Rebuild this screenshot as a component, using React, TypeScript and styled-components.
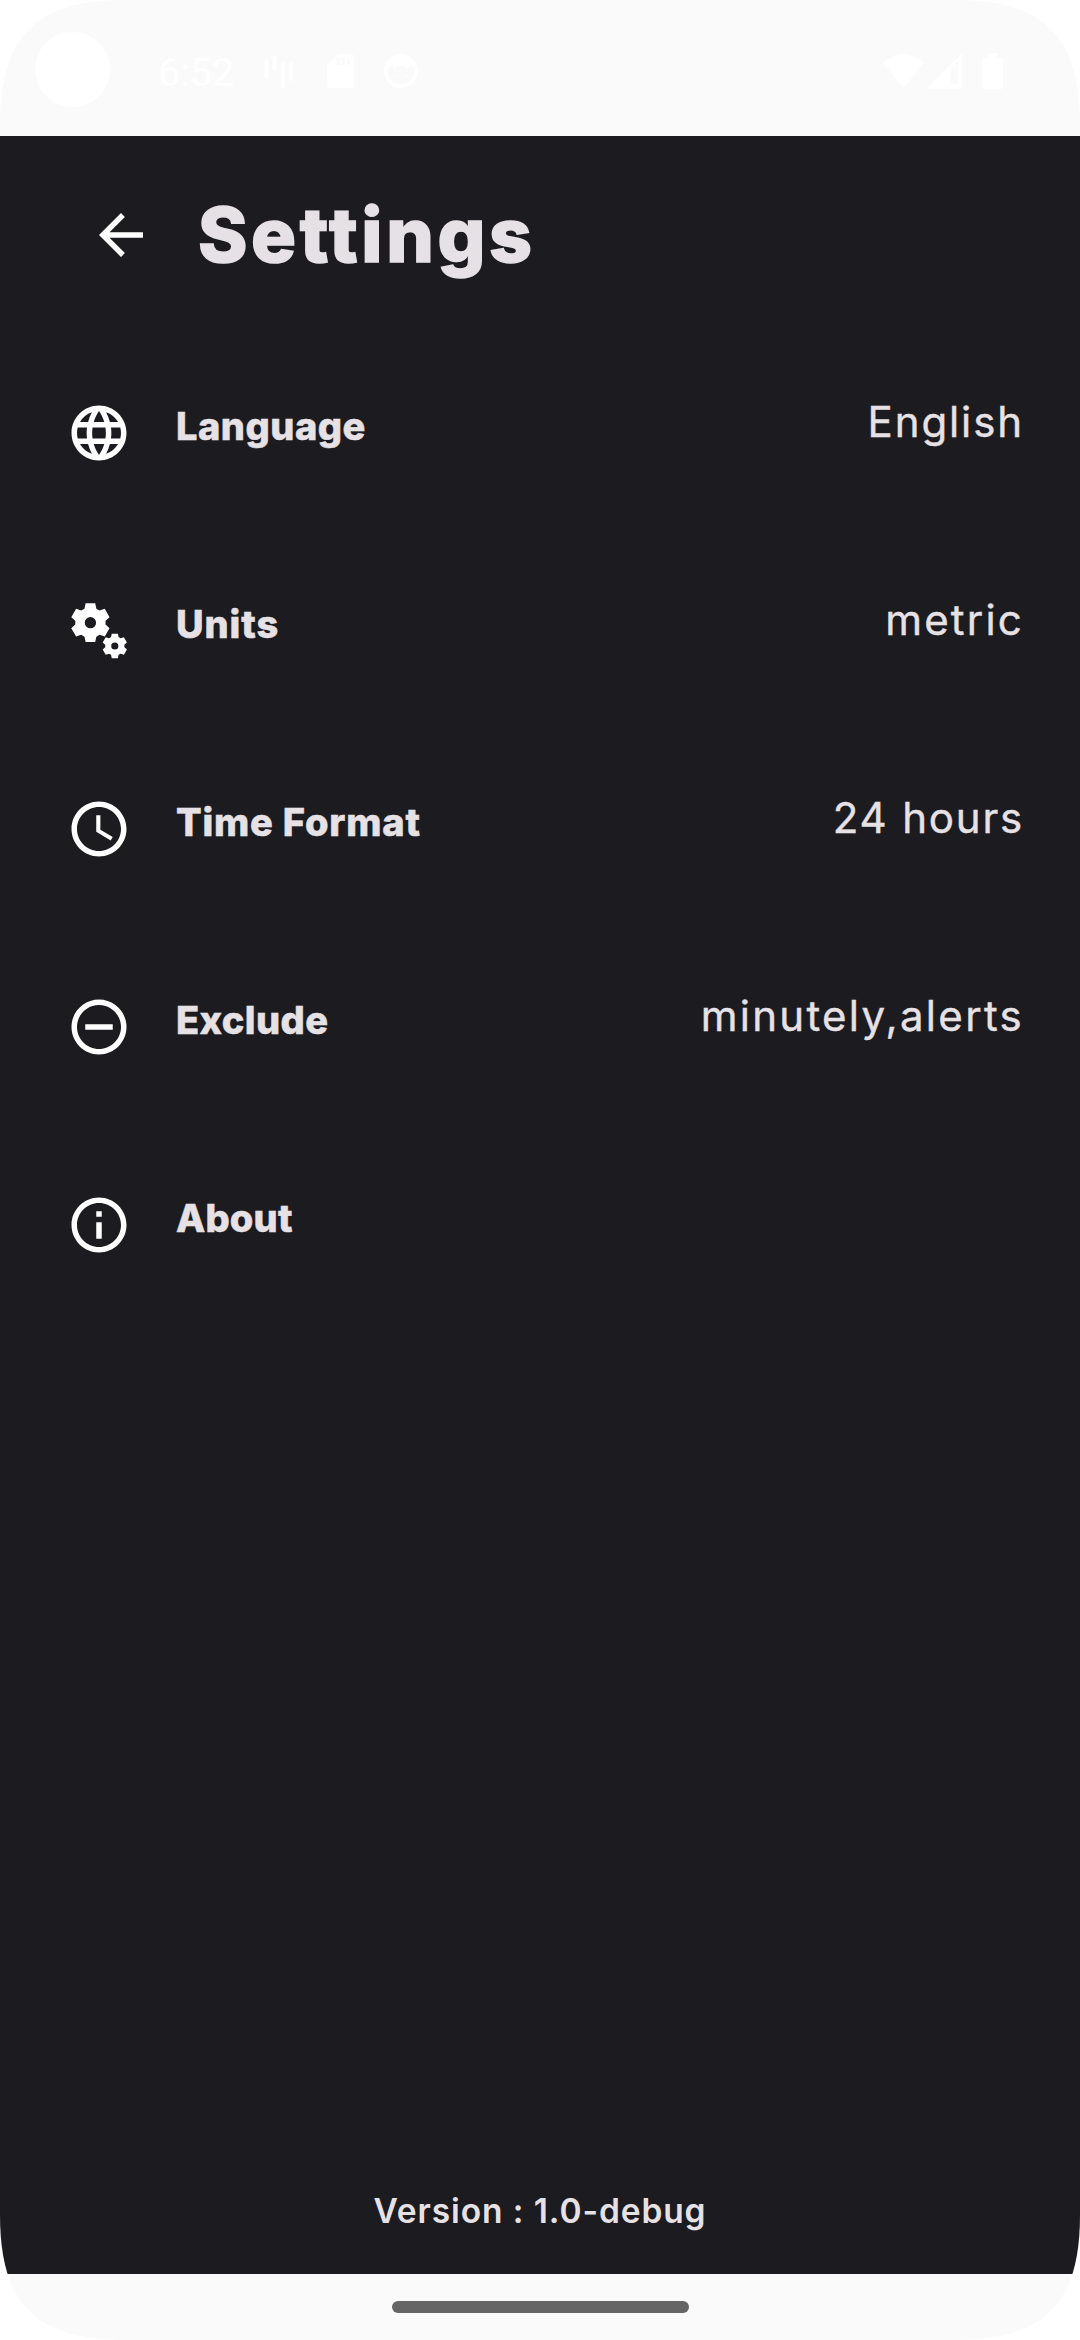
import React from "react";
import styled, { createGlobalStyle } from "styled-components";
import { MdArrowBack, MdLanguage, MdAccessTime, MdRemoveCircleOutline, MdInfoOutline } from "react-icons/md";

const Global = createGlobalStyle`
  *, *::before, *::after { box-sizing: border-box; }
  body { margin: 0; background: #ffffff; }
`;

const Screen = styled.div`
  width: 1080px;
  height: 2340px;
  display: flex;
  flex-direction: column;
  overflow: hidden;
  background: #fafafa;
  color: #e6e1e5;
  font-family: Inter, Roboto, "Liberation Sans", sans-serif;
  clip-path: path("M0 125C0 36 36 0 125 0H955C1044 0 1080 36 1080 125V2215C1080 2304 1044 2340 955 2340H125C36 2340 0 2304 0 2215Z");
`;

const StatusBar = styled.header`
  height: 136px;
  flex: none;
  display: flex;
  align-items: flex-start;
  justify-content: space-between;
  padding: 32px 77px 0 35px;
  color: #ffffff;
`;

const StatusGroup = styled.div`
  display: flex;
  align-items: center;
  height: 78px;
`;

const Camera = styled.div`
  width: 75px;
  height: 75px;
  margin-bottom: 3px;
  border-radius: 50%;
  background: #ffffff;
`;

const Clock = styled.span`
  width: 76px;
  margin: 3px 29px 0 48px;
  font: 400 39.5px/46px Roboto, sans-serif;
`;

const Glyph = styled.svg<{ $w: number; $gap?: number }>`
  display: block;
  flex: none;
  width: ${(p) => p.$w}px;
  height: 36px;
  margin-left: ${(p) => p.$gap ?? 0}px;
  fill: currentColor;
`;

const Main = styled.main`
  flex: 1;
  display: flex;
  flex-direction: column;
  background: #1c1b1f;
`;

const TitleBar = styled.div`
  height: 198px;
  display: flex;
  align-items: center;
  padding-left: 88px;
`;

const BackIcon = styled(MdArrowBack)`
  width: 66px;
  height: 66px;
  color: #ffffff;
`;

const Title = styled.h1`
  margin: 0 0 0 44px;
  font-size: 75px;
  line-height: 90px;
  font-weight: 800;
  letter-spacing: 3.6px;
  font-variant-ligatures: none;
  -webkit-text-stroke: 1.5px currentColor;
`;

const List = styled.ul`
  list-style: none;
  margin: 0;
  padding: 0;
`;

const Row = styled.li`
  height: 198px;
  display: flex;
  align-items: flex-start;
  padding: 66px 56px 0 66px;
`;

const RowIcon = styled.span`
  display: flex;
  width: 66px;
  height: 66px;
  color: #ffffff;
  svg {
    width: 66px;
    height: 66px;
    fill: currentColor;
  }
`;

const Label = styled.span<{ $spacing: number }>`
  margin: 3px 0 0 44px;
  font-size: 38px;
  line-height: 46px;
  font-weight: 800;
  letter-spacing: ${(p) => p.$spacing}px;
  -webkit-text-stroke: 0.5px currentColor;
`;

const Value = styled.span<{ $spacing: number }>`
  margin: -4px 0 0 auto;
  font-size: 42px;
  line-height: 52px;
  font-weight: 400;
  letter-spacing: ${(p) => p.$spacing}px;
  -webkit-text-stroke: 0.4px currentColor;
`;

const Version = styled.p`
  margin: auto 0 40px;
  text-align: center;
  font-size: 33.5px;
  line-height: 46px;
  font-weight: 600;
  letter-spacing: 0.9px;
`;

const NavBar = styled.footer`
  height: 66px;
  flex: none;
  display: flex;
  align-items: center;
  justify-content: center;
`;

const Handle = styled.div`
  width: 297px;
  height: 12px;
  border-radius: 6px;
  background: #656565;
`;

// Six-toothed gear centred on (cx, cy) with a round hole.
function gearPath(cx: number, cy: number, r: number): string {
  const at = (deg: number, rad: number) => {
    const a = (deg * Math.PI) / 180;
    return `${(cx + rad * r * Math.sin(a)).toFixed(2)} ${(cy - rad * r * Math.cos(a)).toFixed(2)}`;
  };
  const points: string[] = [];
  for (let i = 0; i < 6; i++) {
    const d = i * 60;
    points.push(at(d - 23, 0.78), at(d - 14, 1.02), at(d + 14, 1.02), at(d + 23, 0.78));
  }
  const h = r * 0.29;
  return `M${points.join("L")}ZM${cx - h} ${cy}a${h} ${h} 0 1 0 ${2 * h} 0a${h} ${h} 0 1 0 ${-2 * h} 0Z`;
}

const GearsIcon = () => (
  <svg viewBox="0 0 24 24">
    <path fillRule="evenodd" d={gearPath(8.88, 8.97, 7.1) + gearPath(17.75, 17.45, 4.5)} />
  </svg>
);

const items = [
  { label: "Language", ls: 0.5, value: "English", vs: 1.9, icon: <MdLanguage /> },
  { label: "Units", ls: 0.9, value: "metric", vs: 2.2, icon: <GearsIcon /> },
  { label: "Time Format", ls: 0.8, value: "24 hours", vs: 1.8, icon: <MdAccessTime /> },
  { label: "Exclude", ls: 0.4, value: "minutely,alerts", vs: 2.3, icon: <MdRemoveCircleOutline /> },
  { label: "About", ls: 0.2, value: "", vs: 0, icon: <MdInfoOutline /> },
];

export default function App() {
  return (
    <>
      <Global />
      <Screen>
        <StatusBar>
          <StatusGroup>
            <Camera />
            <Clock>6:52</Clock>
            <Glyph $w={30} $gap={1} viewBox="0 0 30 36">
              <path d="M2.5 9v14M10.500 4v11M19 11v22M27 11v15" stroke="currentColor" strokeWidth="4" strokeLinecap="round" />
            </Glyph>
            <Glyph $w={27} $gap={33} viewBox="0 0 27 36">
              <path fillRule="evenodd" d="M11 1H24a3 3 0 0 1 3 3V32a3 3 0 0 1-3 3H3a3 3 0 0 1-3-3V12ZM10 5v7h3V5ZM15 5v7h3V5ZM20 5v7h3V5Z" />
            </Glyph>
            <Glyph $w={34} $gap={30} viewBox="0 0 34 36">
              <path fillRule="evenodd" d="M17 1a17 17 0 1 0 0 34a17 17 0 1 0 0-34ZM8 11l2 5 4-3h6l4 3 3-5c4 5 4 11 1 15-5 7-17 7-22 0-3-5-2-11 2-15Z" />
              <circle cx="11" cy="23" r="1" />
              <circle cx="22" cy="23" r="1" />
            </Glyph>
          </StatusGroup>
          <StatusGroup>
            <Glyph $w={41} viewBox="0 0 41 36">
              <path d="M0 10Q20.500-8 41 10L20.500 35Z" />
            </Glyph>
            <Glyph $w={35} $gap={3} viewBox="0 0 35 36">
              <path fillRule="evenodd" d="M0 35.500 35 0.500V35.500ZM24 14V31.500H31V8Z" />
            </Glyph>
            <Glyph $w={21} $gap={20} viewBox="0 0 21 36">
              <path d="M6 0h9v4h4a2 2 0 0 1 2 2v28a2 2 0 0 1-2 2H2a2 2 0 0 1-2-2V6a2 2 0 0 1 2-2h4Z" />
            </Glyph>
          </StatusGroup>
        </StatusBar>
        <Main>
          <TitleBar>
            <BackIcon />
            <Title>Settings</Title>
          </TitleBar>
          <List>
            {items.map((item) => (
              <Row key={item.label}>
                <RowIcon>{item.icon}</RowIcon>
                <Label $spacing={item.ls}>{item.label}</Label>
                {item.value && <Value $spacing={item.vs}>{item.value}</Value>}
              </Row>
            ))}
          </List>
          <Version>Version : 1.0-debug</Version>
        </Main>
        <NavBar>
          <Handle />
        </NavBar>
      </Screen>
    </>
  );
}
